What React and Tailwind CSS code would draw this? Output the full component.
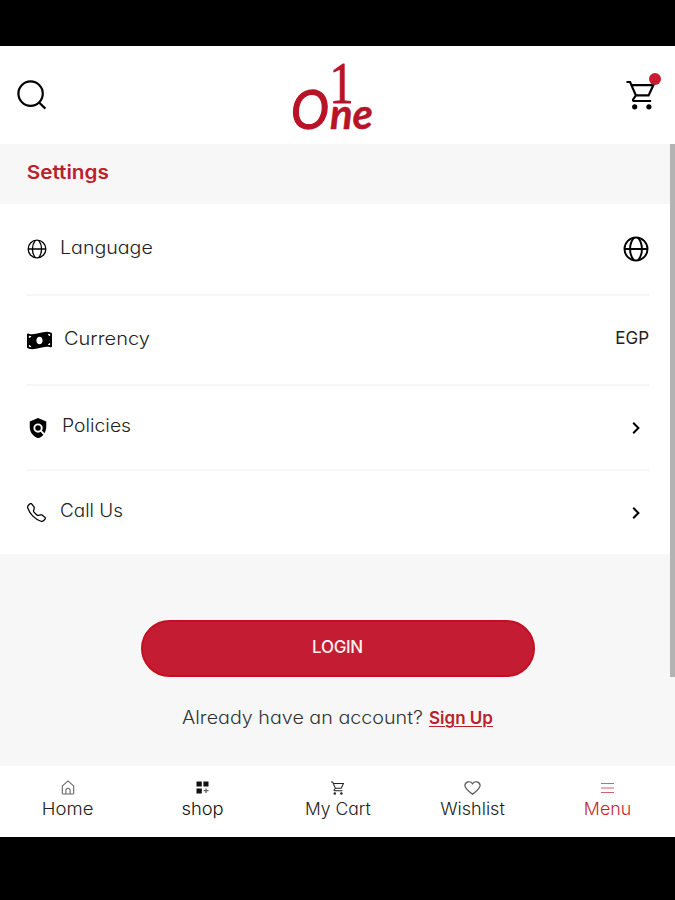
import React from "react";
import { FaMoneyBillWave } from "react-icons/fa";
import { MdPolicy } from "react-icons/md";
import { BsTelephone } from "react-icons/bs";

const stroke = { fill: "none", stroke: "currentColor" };

function SearchIcon() {
  return (
    <svg className="h-[30px] w-[30px]" viewBox="0 0 30 30" {...stroke} strokeWidth="2.2">
      <circle cx="13.6" cy="13.6" r="12.2" />
      <path d="M21.8 22.2l6.6 6.4" />
    </svg>
  );
}

function CartIcon({ className }) {
  return (
    <svg className={className} viewBox="0 0 28 30" {...stroke} strokeWidth="2.2">
      <path d="M0 2h3.6l5.8 13.4h12.7L26.8 5.2H5M9.4 15.4L6.8 19.2q-.9 1.8 1.2 1.8h16.6" />
      <circle cx="8.2" cy="26.8" r="2.6" fill="currentColor" stroke="none" />
      <circle cx="22.4" cy="26.8" r="2.6" fill="currentColor" stroke="none" />
    </svg>
  );
}

function GlobeIcon({ className, width = 2 }) {
  return (
    <svg className={className} viewBox="0 0 26 26" {...stroke} strokeWidth={width}>
      <circle cx="13" cy="13" r="11.5" />
      <path d="M10.8 1.8c-5 6.4-5 16 0 22.4M15.2 1.8c5 6.4 5 16 0 22.4M1.5 13h23" />
    </svg>
  );
}

function ChevronIcon() {
  return (
    <svg className="h-3 w-2" viewBox="0 0 8 12" {...stroke} strokeWidth="2">
      <path d="M1.2 .8L6.4 6l-5.2 5.2" />
    </svg>
  );
}

function HomeIcon() {
  return (
    <svg className="h-[15px] w-[14px] text-[#666]" viewBox="0 0 14 15" {...stroke} strokeWidth="1.1">
      <path d="M.9 6.3L7 .9l6.1 5.4M1.3 6v7.2q0 .8.8.8h9.8q.8 0 .8-.8V6M4.9 14v-3.7a2.1 2.1 0 0 1 4.2 0V14" />
    </svg>
  );
}

function ShopIcon() {
  return (
    <svg className="h-[13px] w-[13px]" viewBox="0 0 13 13">
      <path d="M.5.5h5.3v5H.5zM7.4.5h5.1v5H7.4zM.5 7.5h5.3v5H.5z" fill="currentColor" />
      <path d="M9.4 7.5h1.3V9h1.8v1.3h-1.8v1.8H9.4v-1.8H7.6V9h1.8z" fill="#666" />
    </svg>
  );
}

function HeartIcon() {
  return (
    <svg className="h-[14px] w-[17px] text-[#555]" viewBox="0 0 17 14" {...stroke} strokeWidth="1.2">
      <path d="M8.5 2.7C7-.1 1.2-.2.9 4.5.8 8 5.7 10.7 8.5 13.2 11.3 10.7 16.2 8 16.1 4.5 15.8-.2 10-.1 8.5 2.7z" />
    </svg>
  );
}

function MenuIcon() {
  return (
    <svg className="h-3 w-[13px] text-[#d6606c]" viewBox="0 0 13 12" {...stroke} strokeWidth="1.2">
      <path d="M0 1.5h13M0 6h13M0 10.5h13" />
    </svg>
  );
}

function Logo() {
  return (
    <svg className="h-[84px] w-[92px] overflow-visible" viewBox="0 0 92 84" fill="#b81327" stroke="#b81327" strokeLinejoin="round">
      <text x="39.5" y="49.5" fontFamily="'Liberation Serif', serif" fontSize="60" strokeWidth="1" textLength="24" lengthAdjust="spacingAndGlyphs">1</text>
      <g fontFamily="Lato, sans-serif" fontStyle="italic">
        <text x="1" y="76.3" fontSize="55" fontWeight="400" strokeWidth="1.3" textLength="38" lengthAdjust="spacingAndGlyphs">O</text>
        <text x="40" y="76.3" fontSize="42" fontWeight="700" strokeWidth=".4" textLength="43" lengthAdjust="spacingAndGlyphs">ne</text>
      </g>
    </svg>
  );
}

function Row({ height, icon, label, stretch, right, last }) {
  return (
    <div className={`flex items-center ${height} ${last ? "" : "border-b-2 border-[#f6f6f6]"}`}>
      {icon}
      <span className={`-mt-1 origin-left text-[18px] font-light text-[#222] ${stretch}`}>{label}</span>
      <div className="ml-auto flex items-center">{right}</div>
    </div>
  );
}

const tabs = [
  { label: "Home", icon: <HomeIcon />, tone: "text-[#222]", stretch: "scale-x-[1.09]" },
  { label: "shop", icon: <ShopIcon />, tone: "text-[#111]", stretch: "scale-x-[1.08]" },
  { label: "My Cart", icon: <CartIcon className="h-[14px] w-[13px]" />, tone: "text-[#222]", stretch: "scale-x-[1.03]" },
  { label: "Wishlist", icon: <HeartIcon />, tone: "text-[#222]", stretch: "scale-x-[1.06]" },
  { label: "Menu", icon: <MenuIcon />, tone: "text-[#c81f30]", stretch: "scale-x-[1.05]" },
];

export default function App() {
  return (
    <div className="flex h-[900px] w-[675px] flex-col overflow-hidden bg-black pt-[46px] font-['Inter',sans-serif] [font-feature-settings:'cv11','ss03']">
      <header className="grid h-[98px] shrink-0 grid-cols-3 items-center bg-white pr-[20px] pl-[17px]">
        <SearchIcon />
        <div className="flex justify-center">
          <Logo />
        </div>
        <div className="relative justify-self-end">
          <CartIcon className="h-[30px] w-[29px]" />
          <span className="absolute -top-[7px] -right-[6px] size-3 rounded-full bg-[#c91c31]" />
        </div>
      </header>

      <main className="relative flex h-[622px] shrink-0 flex-col bg-[#f7f7f7]">
        <h1 className="h-[60px] w-fit shrink-0 origin-left scale-x-[1.09] pl-[24.5px] text-[19px] leading-[57px] font-semibold text-[#bd1e2b]">Settings</h1>

        <section className="bg-white pr-[26px] pl-[27px]">
          <Row
            height="h-[92px]"
            icon={<GlobeIcon className="mr-[13px] size-5" width={1.7} />}
            label="Language"
            stretch="scale-x-[1.09]"
            right={<GlobeIcon className="size-[26px]" width={1.9} />}
          />
          <Row
            height="h-[90px]"
            icon={<FaMoneyBillWave className="mr-[12px] h-[25px] w-[25px]" />}
            label="Currency"
            stretch="scale-x-[1.11]"
            right={<span className="-mt-0.5 text-[17px] text-[#222]">EGP</span>}
          />
          <Row
            height="h-[85px]"
            icon={<MdPolicy className="mr-[13px] size-[22px]" />}
            label="Policies"
            stretch="scale-x-[1.075]"
            right={<div className="mr-[9px]"><ChevronIcon /></div>}
          />
          <Row
            height="h-[83px]"
            icon={<BsTelephone className="mr-[13.5px] size-[19px]" />}
            label="Call Us"
            stretch="scale-x-[1.05]"
            right={<div className="mr-[9px]"><ChevronIcon /></div>}
            last
          />
        </section>

        <section className="flex flex-col items-center pt-[66px]">
          <button className="h-[57px] w-[394px] rounded-full border-2 border-[#c40f20] bg-[#c41c33] pb-px text-[17px] font-medium tracking-[-0.3px] text-[#fff0f0]">LOGIN</button>
          <p className="mt-[27px] flex items-baseline gap-[7px] text-[18px] leading-7 font-light text-[#333]">
            <span className="w-[240px] origin-left scale-x-[1.095] whitespace-nowrap">Already have an account?</span>
            <a className="text-[17px] font-semibold text-[#bd1e2b] underline decoration-1 underline-offset-2">Sign Up</a>
          </p>
        </section>

        <div className="absolute top-0 right-0 h-[533px] w-[5px] bg-[#b3b3b3]" />
      </main>

      <nav className="grid h-[71px] shrink-0 grid-cols-5 bg-white">
        {tabs.map((tab) => (
          <div key={tab.label} className={`flex flex-col items-center pt-[14px] ${tab.tone}`}>
            <div className="flex h-[15px] items-center">{tab.icon}</div>
            <span className={`mt-[2px] text-[17px] leading-[24px] font-light ${tab.stretch}`}>{tab.label}</span>
          </div>
        ))}
      </nav>
    </div>
  );
}
